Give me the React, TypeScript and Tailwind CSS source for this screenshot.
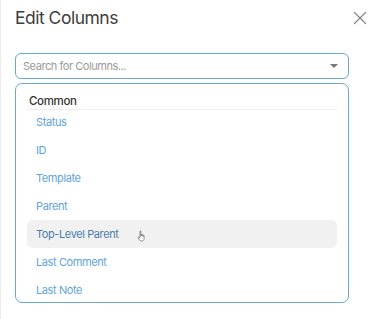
import { X } from 'lucide-react';

const items = ['Status', 'ID', 'Template', 'Parent', 'Top-Level Parent', 'Last Comment', 'Last Note'];

function HandCursor() {
  return (
    <svg width="10" height="12" viewBox="0 0 10 12" className="absolute left-[110px] top-[10px]">
      <path
        d="M3 1.2c0-.5.8-.5.8 0V6h.3V4.6c0-.5.8-.5.8 0V6h.3V5c0-.5.8-.5.8 0V6.3h.3V5.6c0-.5.8-.5.8 0V8.4C7.2 10 6.3 11 5 11H4.3C3.3 11 2.7 10.4 2.2 9.6L1 7.5c-.3-.5.3-.9.7-.5L3 8.2z"
        fill="#fff"
        stroke="#777"
        strokeWidth="0.8"
        strokeLinejoin="round"
      />
    </svg>
  );
}

export default function App() {
  return (
    <div
      className="w-[374px] h-[319px] bg-white border-l border-[#ececec] px-[14px] pt-[6px]"
      style={{ fontFamily: 'Inter, "Noto Sans", sans-serif' }}
    >
      <div className="flex items-center justify-between h-[24px]">
        <h1 className="text-[17.5px] tracking-[-0.5px] text-[#3d3d3d]">Edit Columns</h1>
        <X size={22} strokeWidth={1.4} className="text-[#8a8a8a] mr-[-11px]" />
      </div>

      <div className="mt-[23px] h-[26px] w-[334px] rounded-[6px] border-[1.5px] border-[#6aa6dc] flex items-center justify-between pl-[7px] pr-[10px]">
        <span className="text-[11px] tracking-[-0.45px] text-[#9a9a9a]">Search for Columns...</span>
        <span className="w-0 h-0 border-l-[4px] border-r-[4px] border-t-[4px] border-l-transparent border-r-transparent border-t-[#777]" />
      </div>

      <div className="mt-[4px] w-[334px] h-[220px] rounded-[7px] border-[1.5px] border-[#6aa6dc] px-[11px] pt-[10px]">
        <div className="text-[11.5px] tracking-[-0.35px] font-medium text-[#333] pl-[2px] pb-[1px] border-b-[1.5px] border-[#eeeeee] leading-[14px]">
          Common
        </div>
        <div className="flex flex-col mt-[-2px]">
          {items.map(item => {
            const hot = item === 'Top-Level Parent';
            return (
              <div
                key={item}
                className={`relative h-[28px] flex items-center pl-[9px] rounded-[6px] text-[11px] tracking-[-0.4px] ${hot ? 'bg-[#f1f1f1] text-[#4a7eae]' : 'text-[#62a3dc]'}`}
              >
                {item}
                {hot && <HandCursor />}
              </div>
            );
          })}
        </div>
      </div>
    </div>
  );
}
